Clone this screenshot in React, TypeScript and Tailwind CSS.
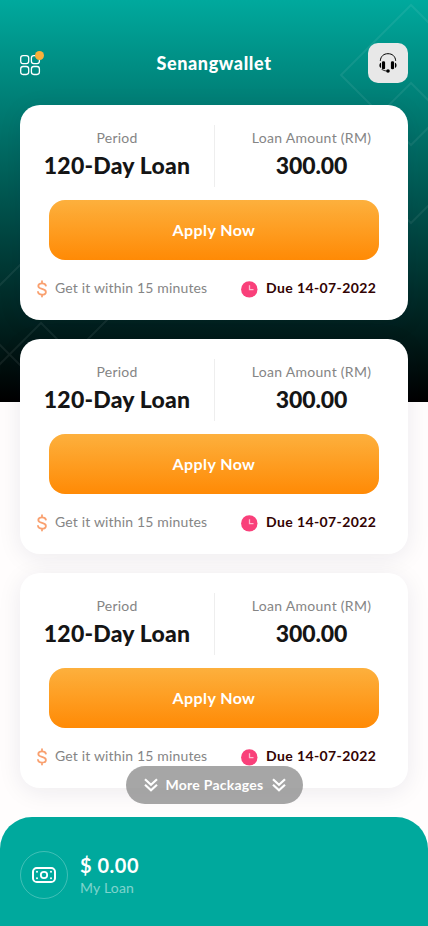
import React from "react";

function GridIcon() {
  return (
    <svg width="26" height="28" viewBox="0 0 26 28" fill="none" className="block">
      <g stroke="#ffffff" strokeWidth="1.3">
        <rect x="0.7" y="5.7" width="8" height="8" rx="2.4" />
        <rect x="11.4" y="5.7" width="8" height="8" rx="2.4" />
        <rect x="0.7" y="16.5" width="8" height="8" rx="2.4" />
        <rect x="11.4" y="16.5" width="8" height="8" rx="2.4" />
      </g>
      <circle cx="19.5" cy="5.5" r="4.5" fill="#fbb03b" />
    </svg>
  );
}

function HeadsetIcon() {
  return (
    <svg width="20" height="22" viewBox="0 0 20 22" fill="none">
      <path d="M2.3 8.8C2.7 4.200 5.700 1.700 10 1.700s7.300 2.500 7.700 7.100" stroke="#000" strokeWidth="1" />
      <rect x="3.900" y="9.300" width="3.200" height="8" rx="1.400" fill="#000" />
      <rect x="12.900" y="9.300" width="3.200" height="8" rx="1.400" fill="#000" />
      <path d="M3 10.700v5.200C.9 15.300.9 11.300 3 10.700ZM17 10.700v5.200c2.100-.6 2.100-4.600 0-5.200Z" fill="#000" />
      <path d="M3.600 17c.7 1.200 2.800 1.800 5.200 2" stroke="#000" strokeWidth=".8" />
      <circle cx="10" cy="19" r="1.800" fill="#000" />
    </svg>
  );
}

function DollarIcon() {
  return (
    <svg width="10" height="18" viewBox="0 0 10 18" fill="none" stroke="#f9a06f" strokeWidth="1.8" strokeLinecap="round" strokeLinejoin="round">
      <path d="M5 1.2v2M5 14.6v2M8.9 5.7C8.6 4.2 7.2 3.3 5 3.3 2.7 3.3 1.3 4.4 1.3 6c0 1.700 1.400 2.300 3.700 2.900s3.900 1.300 3.900 3c0 1.600-1.500 2.700-3.900 2.700-2.300 0-3.800-1-4-2.600" />
    </svg>
  );
}

function ClockIcon() {
  return (
    <svg width="17" height="17" viewBox="0 0 17 17" fill="none">
      <circle cx="8.300" cy="8.400" r="8.200" fill="#f9407a" />
      <path d="M8.500 4.300v4.400h4" stroke="#ffb9cf" strokeWidth="1.300" />
    </svg>
  );
}

function ChevronsIcon() {
  return (
    <svg width="14" height="14" viewBox="0 0 14 14" fill="none" stroke="#fff" strokeWidth="2.200">
      <path d="M1 1.300 7 6.800l6-5.500M1 6.800l6 5.500 6-5.500" />
    </svg>
  );
}

function CashIcon() {
  return (
    <svg width="24" height="16" viewBox="0 0 24 16" fill="none">
      <rect x="1" y="1" width="22" height="14" rx="3.800" stroke="#fff" strokeWidth="2" />
      <circle cx="12" cy="8" r="3.200" stroke="#fff" strokeWidth="1.800" />
      <g fill="#fff">
        <circle cx="5" cy="4.700" r="1" />
        <circle cx="19" cy="4.700" r="1" />
        <circle cx="5" cy="11.300" r="1" />
        <circle cx="19" cy="11.300" r="1" />
      </g>
    </svg>
  );
}

function Backdrop() {
  return (
    <div className="absolute inset-x-0 top-0 h-[402px] bg-linear-to-b/srgb from-[#00a99d] to-black">
      <svg width="428" height="402" viewBox="0 0 428 402" fill="none" stroke="#fff" strokeOpacity=".07" strokeWidth="2">
        <path d="M411 5 341 75l70 70 70-70ZM411 83l-70 70 70 70 70-70Z" />
        <path d="M-30 315 60 225M-30 394 41 323l70 70M-30 315l90 90M41 386l90-90" />
      </svg>
    </div>
  );
}

function LoanCard() {
  return (
    <section className="flex h-[215px] flex-col rounded-[20px] bg-white shadow-[0_4px_24px_rgba(30,20,60,0.08)]">
      <div className="flex h-[95px] pt-5">
        <div className="flex w-[194px] flex-col items-center">
          <span className="mt-[3px] text-sm leading-5 tracking-[0.2px] text-[#858585]">Period</span>
          <span className="mt-[3px] text-[23px] leading-[28px] font-black tracking-[0.2px] whitespace-nowrap text-[#151515]">120-Day Loan</span>
        </div>
        <div className="h-[62px] w-px bg-[#eeeeee]" />
        <div className="flex flex-1 flex-col items-center">
          <span className="mt-[3px] text-sm leading-5 tracking-[0.3px] whitespace-nowrap text-[#858585]">Loan Amount (RM)</span>
          <span className="mt-[3px] text-[23px] leading-[28px] font-black tracking-[-0.1px] text-[#151515]">300.00</span>
        </div>
      </div>
      <button className="ml-[29px] h-[60px] w-[330px] rounded-[16px] bg-linear-to-b/srgb from-[#fdb03d] to-[#ff8a05] pb-px text-base font-bold tracking-[0.4px] text-white">
        Apply Now
      </button>
      <div className="flex h-[58px] items-center pl-[17px]">
        <DollarIcon />
        <span className="ml-2 w-[186px] pb-0.5 text-sm tracking-[0.16px] whitespace-nowrap text-[#858585]">Get it within 15 minutes</span>
        <ClockIcon />
        <span className="ml-2 pb-0.5 text-sm font-bold tracking-[0.4px] whitespace-nowrap text-[#320303]">Due 14-07-2022</span>
      </div>
    </section>
  );
}

export default function App() {
  return (
    <div className="relative flex h-[926px] w-[428px] flex-col overflow-hidden bg-[#fffdfd] font-['Lato',sans-serif]">
      <Backdrop />
      <header className="relative flex h-[105px] justify-between px-5 pt-[43px]">
        <div className="w-10 pt-[7px]"><GridIcon /></div>
        <h1 className="text-lg leading-10 font-black tracking-[0.6px] text-white">Senangwallet</h1>
        <button className="flex size-10 items-center justify-center rounded-[10px] bg-[#e8e8e8]"><HeadsetIcon /></button>
      </header>
      <main className="relative flex flex-col gap-[19px] px-5">
        <LoanCard />
        <LoanCard />
        <LoanCard />
      </main>
      <button className="absolute top-[766px] left-[126px] flex h-[38px] w-[177px] items-center justify-center gap-2 rounded-full bg-[#909090]/80 text-sm font-bold whitespace-nowrap text-white">
        <ChevronsIcon />
        <span className="tracking-[0.25px]">More Packages</span>
        <ChevronsIcon />
      </button>
      <footer className="mt-[29px] flex h-[109px] items-start rounded-t-[32px] bg-[#00a99d] px-5 pt-[34px]">
        <div className="flex size-12 items-center justify-center rounded-full border border-white/25"><CashIcon /></div>
        <div className="ml-3 flex flex-col">
          <span className="text-xl leading-[28px] font-bold tracking-[0.5px] text-white">$ 0.00</span>
          <span className="text-sm leading-[18px] tracking-[0.2px] text-white/50">My Loan</span>
        </div>
      </footer>
    </div>
  );
}
